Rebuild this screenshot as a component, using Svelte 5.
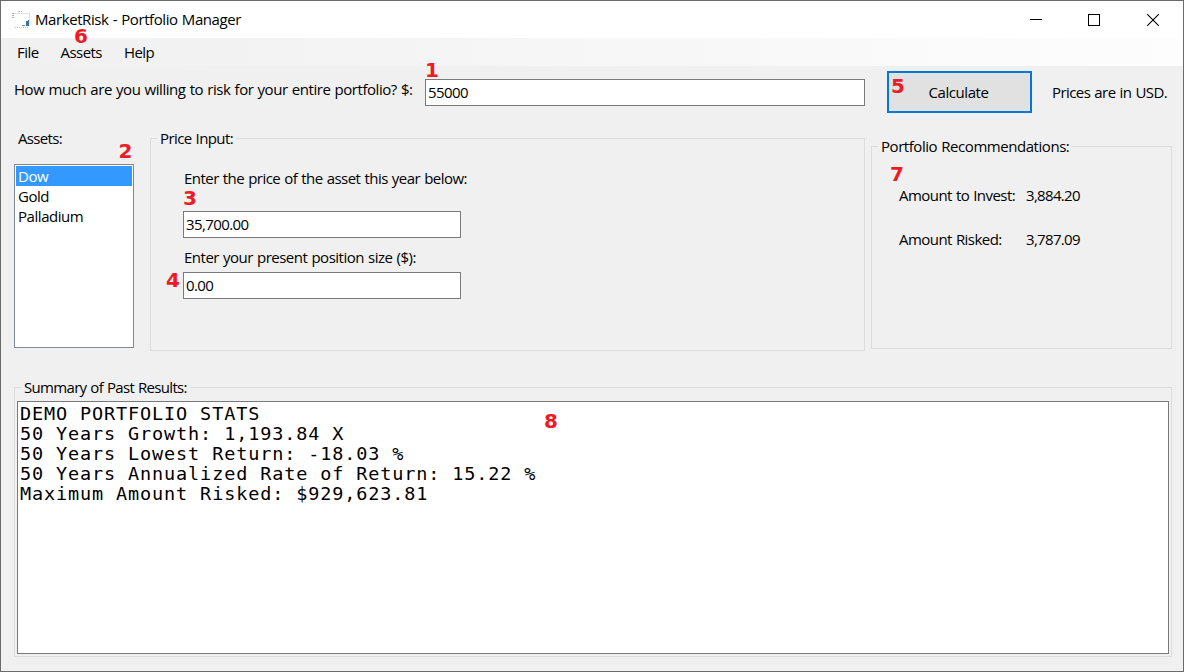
<script>
  let risk = $state('55000');
  let price = $state('35,700.00');
  let position = $state('0.00');
  let selected = $state('Dow');
  const assets = ['Dow', 'Gold', 'Palladium'];
  const summary = [
    'DEMO PORTFOLIO STATS',
    '50 Years Growth: 1,193.84 X',
    '50 Years Lowest Return: -18.03 %',
    '50 Years Annualized Rate of Return: 15.22 %',
    'Maximum Amount Risked: $929,623.81'
  ];
  const markers = [
    { n: 1, x: 424, y: 59 },
    { n: 2, x: 117.5, y: 140 },
    { n: 3, x: 182, y: 187 },
    { n: 4, x: 165, y: 269 },
    { n: 5, x: 890, y: 75 },
    { n: 6, x: 73, y: 25 },
    { n: 7, x: 889, y: 163 },
    { n: 8, x: 543, y: 410 }
  ];
</script>

<div class="window">
  <header class="titlebar">
    <svg class="app-icon" width="18" height="18" viewBox="0 0 18 18" shape-rendering="crispEdges">
      <path d="M6 .5h2M9 .5h1" stroke="#a9b9c6" />
      <path d="M0 2.5h2M0 4.5h2M0 6.5h2" stroke="#b5a9a9" />
      <path d="M2 2.5h16M17.5 3v12" stroke="#e2e2e2" fill="none" />
      <path d="M3 16.5h14" stroke="#bcc4cc" stroke-dasharray="1 1" />
      <path d="M10 14h3v1h-3z" fill="#6b8fb0" />
      <path d="M14 10h2v5h-2zM16 9h1v6h-1z" fill="#3a72a8" />
    </svg>
    <h1>MarketRisk - Portfolio Manager</h1>
    <div class="controls">
      <svg width="12" height="12" shape-rendering="crispEdges"><path d="M0 5.5h12" stroke="#000" /></svg>
      <svg width="12" height="12" shape-rendering="crispEdges"><rect x=".5" y=".5" width="11" height="11" fill="none" stroke="#000" /></svg>
      <svg class="close" width="12" height="12"><path d="M.2.2l11.6 11.6M11.8.2L.2 11.8" stroke="#000" stroke-width="1.1" /></svg>
    </div>
  </header>

  <nav class="menu">
    <span>File</span><span>Assets</span><span>Help</span>
  </nav>

  <main>
    <section class="top">
      <label class="question" for="risk">How much are you willing to risk for your entire portfolio? $:</label>
      <input id="risk" class="risk" bind:value={risk} />
      <button class="calculate">Calculate</button>
      <span class="note">Prices are in USD.</span>
    </section>

    <section class="middle">
      <div class="assets">
        <span class="assets-label">Assets:</span>
        <ul>
          {#each assets as a}
            <li class:selected={a === selected}>{a}</li>
          {/each}
        </ul>
      </div>
      <div class="group price">
        <div class="caption"><span>Price Input:</span></div>
        <div class="fields">
          <label class="price-label" for="price">Enter the price of the asset this year below:</label>
          <input id="price" bind:value={price} />
          <label class="position-label" for="position">Enter your present position size ($):</label>
          <input id="position" bind:value={position} />
        </div>
      </div>
      <div class="group recs">
        <div class="caption"><span>Portfolio Recommendations:</span></div>
        <dl>
          <dt>Amount to Invest:</dt><dd>3,884.20</dd>
          <dt>Amount Risked:</dt><dd>3,787.09</dd>
        </dl>
      </div>
    </section>

    <section class="group summary">
      <div class="caption"><span>Summary of Past Results:</span></div>
      <div class="output">
        {#each summary as line}<p>{line}</p>{/each}
      </div>
    </section>
  </main>

  {#each markers as m}
    <b class="marker" style="left:{m.x}px;top:{m.y}px">{m.n}</b>
  {/each}
</div>

<style>
  :global(body) { margin: 0; }
  .window, .window * { box-sizing: border-box; }
  .window {
    position: relative;
    width: 1184px;
    height: 672px;
    border: 1px solid #6b6b6b;
    background: #f0f0f0;
    display: flex;
    flex-direction: column;
    overflow: hidden;
    color: #000;
    font: 15px/20px "Open Sans", "Noto Sans", sans-serif;
    letter-spacing: -0.45px;
    word-spacing: 0.7px;
    white-space: nowrap;
  }
  .titlebar { height: 37px; background: #fff; display: flex; align-items: center; padding: 0 24px 0 11px; }
  .app-icon { margin-right: 5px; }
  h1 { margin: -2px 0 0; font: inherit; letter-spacing: -0.42px; flex: 1; }
  .controls { display: flex; gap: 46px; }
  .close { margin-left: 1px; }
  .menu {
    height: 28px;
    display: flex;
    align-items: center;
    gap: 22px;
    padding: 0 0 0 16px;
    letter-spacing: -0.55px;
    background: linear-gradient(90deg, #f0f0f0, #fdfdfd);
  }
  main { flex: 1; display: flex; flex-direction: column; padding: 5px 11px 14px 13px; }
  .top { height: 42px; display: flex; align-items: center; flex: none; }
  .question { width: 411px; margin-top: -7px; letter-spacing: -0.45px; }
  input {
    height: 27px;
    border: 1px solid #7a7a7a;
    background: #fff;
    padding: 0 2px 2px;
    margin: 0;
    font: inherit;
    letter-spacing: -0.6px;
    color: inherit;
    outline: none;
  }
  .risk { width: 440px; margin-top: 1px; }
  .calculate {
    width: 145px;
    height: 42px;
    margin: 0 20px 0 22px;
    padding: 0 2px 0 0;
    border: 2px solid #0078d7;
    background: #e1e1e1;
    font: inherit;
    letter-spacing: inherit;
    color: inherit;
  }
  .note { letter-spacing: -0.57px; }
  .middle {
    display: grid;
    grid-template-columns: 136px 721px 301px;
    align-items: start;
    height: 222px;
    margin-top: 16px;
    flex: none;
  }
  .assets { width: 120px; display: flex; flex-direction: column; }
  .assets-label { padding-left: 4px; height: 36px; margin-top: -1px; letter-spacing: -0.65px; }
  ul { list-style: none; margin: 0; padding: 1px; height: 184px; border: 1px solid #828790; background: #fff; }
  li { height: 20px; padding-left: 2px; }
  li.selected { background: #3399ff; color: #fff; }
  .group { border: 1px solid #dcdcdc; }
  .caption { height: 20px; margin-top: -11px; padding-left: 6px; }
  .caption span { background: #f0f0f0; padding: 0 3px; display: inline-block; }
  .price { width: 715px; height: 213px; margin-top: 9px; }
  .price .caption { letter-spacing: -0.6px; }
  .fields { display: flex; flex-direction: column; align-items: flex-start; padding: 20px 0 0 32px; }
  .fields input { width: 278px; }
  .price-label { height: 43px; padding-left: 1px; letter-spacing: -0.54px; }
  .position-label { height: 34px; padding: 9px 0 0 1px; letter-spacing: -0.5px; }
  .recs { height: 203px; margin-top: 17px; }
  dl { display: grid; grid-template-columns: 127px auto; row-gap: 24px; margin: 0; padding: 29px 0 0 27px; }
  dt { letter-spacing: -0.55px; }
  dd { margin: 0; letter-spacing: -0.68px; }
  .summary { margin-top: 36px; height: 270px; flex: none; padding: 0 2px; }
  .summary .caption { padding-left: 4px; height: 24px; letter-spacing: -0.68px; }
  .output {
    height: 253px;
    border: 1px solid #7a7a7a;
    background: #fff;
    padding: 2px;
    font: 18.5px/20px "DejaVu Sans Mono", monospace;
    letter-spacing: 0.87px;
    word-spacing: 0;
  }
  p { margin: 0; }
  .marker {
    position: absolute;
    font: bold 20px/20px "DejaVu Sans", sans-serif;
    letter-spacing: 0;
    color: #ed1c24;
  }
</style>
